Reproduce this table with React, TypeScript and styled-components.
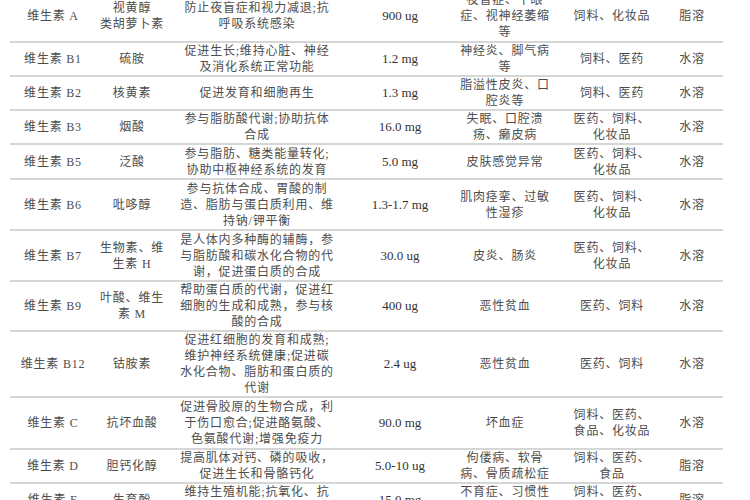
import React from "react";
import styled, { createGlobalStyle } from "styled-components";

const Global = createGlobalStyle`
  html, body { margin: 0; padding: 0; background: #ffffff; }
  body { width: 750px; height: 500px; overflow: hidden; }
`;

const Page = styled.div`
  width: 750px;
  height: 500px;
  overflow: hidden;
  background: #ffffff;
`;

const Table = styled.div`
  margin: -10px 0 0 10px;
  width: 713px;
  display: flex;
  flex-direction: column;
  font-family: "Liberation Serif", "Noto Sans CJK SC", serif;
  font-size: 12px;
  letter-spacing: 0.8px;
  line-height: 16px;
  color: #444444;
`;

const Row = styled.div<{ $h: number }>`
  display: grid;
  grid-template-columns: 86px 72px 178px 108px 102px 112px 48px;
  height: ${(p) => p.$h}px;
  box-sizing: border-box;
  border-bottom: 2px solid #d6d6d6;
`;

const Cell = styled.div<{ $latin?: boolean }>`
  display: flex;
  align-items: center;
  justify-content: center;
  text-align: center;
  white-space: pre-line;
  font-size: ${(p) => (p.$latin ? "13px" : "12px")};
  letter-spacing: ${(p) => (p.$latin ? "0" : "0.8px")};
  color: ${(p) => (p.$latin ? "#333333" : "#4d4d4d")};
`;

type R = { h: number; c: string[] };

const rows: R[] = [
  {
    h: 53,
    c: [
      "维生素 A",
      "视黄醇\n类胡萝卜素",
      "防止夜盲症和视力减退;抗\n呼吸系统感染",
      "900 ug",
      "夜盲症、干眼\n症、视神经萎缩\n等",
      "饲料、化妆品",
      "脂溶",
    ],
  },
  {
    h: 34,
    c: ["维生素 B1", "硫胺", "促进生长;维持心脏、神经\n及消化系统正常功能", "1.2 mg", "神经炎、脚气病\n等", "饲料、医药", "水溶"],
  },
  {
    h: 34,
    c: ["维生素 B2", "核黄素", "促进发育和细胞再生", "1.3 mg", "脂溢性皮炎、口\n腔炎等", "饲料、医药", "水溶"],
  },
  {
    h: 34,
    c: ["维生素 B3", "烟酸", "参与脂肪酸代谢;协助抗体\n合成", "16.0 mg", "失眠、口腔溃\n疡、癞皮病", "医药、饲料、\n化妆品", "水溶"],
  },
  {
    h: 35,
    c: ["维生素 B5", "泛酸", "参与脂肪、糖类能量转化;\n协助中枢神经系统的发育", "5.0 mg", "皮肤感觉异常", "医药、饲料、\n化妆品", "水溶"],
  },
  {
    h: 51,
    c: [
      "维生素 B6",
      "吡哆醇",
      "参与抗体合成、胃酸的制\n造、脂肪与蛋白质利用、维\n持钠/钾平衡",
      "1.3-1.7 mg",
      "肌肉痉挛、过敏\n性湿疹",
      "医药、饲料、\n化妆品",
      "水溶",
    ],
  },
  {
    h: 51,
    c: [
      "维生素 B7",
      "生物素、维\n生素 H",
      "是人体内多种酶的辅酶，参\n与脂肪酸和碳水化合物的代\n谢，促进蛋白质的合成",
      "30.0 ug",
      "皮炎、肠炎",
      "医药、饲料、\n化妆品",
      "水溶",
    ],
  },
  {
    h: 50,
    c: [
      "维生素 B9",
      "叶酸、维生\n素 M",
      "帮助蛋白质的代谢，促进红\n细胞的生成和成熟，参与核\n酸的合成",
      "400 ug",
      "恶性贫血",
      "医药、饲料",
      "水溶",
    ],
  },
  {
    h: 66,
    c: [
      "维生素 B12",
      "钴胺素",
      "促进红细胞的发育和成熟;\n维护神经系统健康;促进碳\n水化合物、脂肪和蛋白质的\n代谢",
      "2.4 ug",
      "恶性贫血",
      "医药、饲料",
      "水溶",
    ],
  },
  {
    h: 52,
    c: [
      "维生素 C",
      "抗坏血酸",
      "促进骨胶原的生物合成，利\n于伤口愈合;促进酪氨酸、\n色氨酸代谢;增强免疫力",
      "90.0 mg",
      "坏血症",
      "饲料、医药、\n食品、化妆品",
      "水溶",
    ],
  },
  {
    h: 34,
    c: [
      "维生素 D",
      "胆钙化醇",
      "提高肌体对钙、磷的吸收，\n促进生长和骨骼钙化",
      "5.0-10 ug",
      "佝偻病、软骨\n病、骨质疏松症",
      "饲料、医药、\n食品",
      "脂溶",
    ],
  },
  {
    h: 34,
    c: [
      "维生素 E",
      "生育酚",
      "维持生殖机能;抗氧化、抗\n衰老",
      "15.0 mg",
      "不育症、习惯性\n流产",
      "饲料、医药、\n食品、化妆品",
      "脂溶",
    ],
  },
];

const isLatin = (s: string) => /^[0-9.\- a-zA-Z]+$/.test(s);

export default function App() {
  return (
    <Page>
      <Global />
      <Table>
        {rows.map((r, i) => (
          <Row key={i} $h={r.h}>
            {r.c.map((t, j) => (
              <Cell key={j} $latin={isLatin(t)}>
                {t}
              </Cell>
            ))}
          </Row>
        ))}
      </Table>
    </Page>
  );
}
